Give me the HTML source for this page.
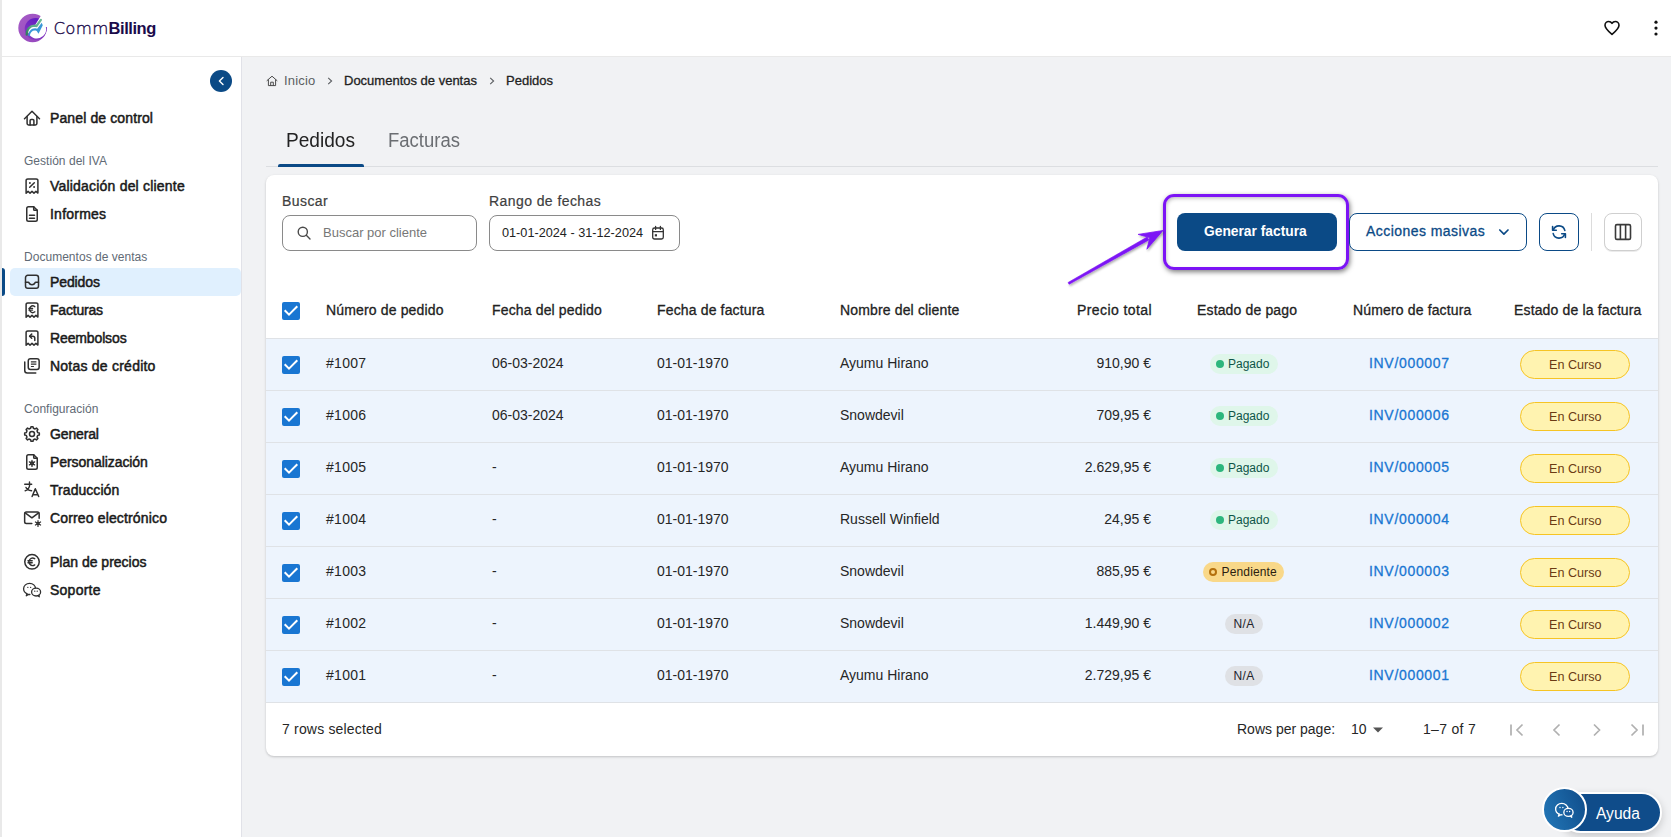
<!DOCTYPE html>
<html lang="es">
<head>
<meta charset="utf-8">
<title>CommBilling - Pedidos</title>
<style>
*{box-sizing:border-box;margin:0;padding:0}
html,body{width:1671px;height:837px;overflow:hidden}
body{background:#f1f2f4;font-family:"Liberation Sans",sans-serif;color:#1f1f1f;position:relative}
.abs{position:absolute}
.t{position:absolute;white-space:nowrap;line-height:1}
#edge{left:0;top:0;width:2px;height:837px;background:#e9e9e9}
#header{left:2px;top:0;width:1669px;height:57px;background:#fff;border-bottom:1px solid #e9e9e9}
#sidebar{left:2px;top:57px;width:240px;height:780px;background:#fff;border-right:1px solid #e1e2e8}
.nav{font-size:14px;color:#1a1a1a;-webkit-text-stroke:.5px #1a1a1a;letter-spacing:.05px}
.sec{font-size:12px;color:#616a75;letter-spacing:.03px}
.ico{position:absolute;width:20px;height:20px;fill:none;stroke:#303030;stroke-width:1.5;stroke-linecap:round;stroke-linejoin:round}
#active{left:10px;top:268px;width:231px;height:28px;background:#e0f0fe;border-radius:5px}
#activebar{left:2px;top:268px;width:3px;height:28px;background:#0b4a86;border-radius:0 3px 3px 0}
#collapse{left:210px;top:70px;width:22px;height:22px;border-radius:50%;background:#0b4a86}

/* main */
.bc{font-size:13px;top:74px}
.med{-webkit-text-stroke:0.3px currentColor}
#tabline{left:266px;top:166px;width:1392px;height:1px;background:#dcdee1}
#tabactive{left:278px;top:164px;width:86px;height:3px;background:#0b4a86;border-radius:2px 2px 0 0}
.tab{font-size:20px;top:130px;transform-origin:0 50%}
#card{left:266px;top:175px;width:1392px;height:581px;background:#fff;border-radius:8px;box-shadow:0 1px 3px rgba(0,0,0,.13),0 1px 2px rgba(0,0,0,.08)}
.lbl{font-size:14px;color:#404040;top:194px;letter-spacing:.42px;-webkit-text-stroke:.2px #404040 !important}
.inp{top:215px;height:36px;border:1px solid #8a8a8a;border-radius:8px;background:#fff}
.btn{top:213px;height:38px;border-radius:8px}
#hl{left:1163px;top:194px;width:186px;height:76px;border:3px solid #7c14f5;border-radius:11px;box-shadow:1px 2px 5px rgba(0,0,0,.5),inset 1px 2px 4px -1px rgba(0,0,0,.3)}
.row{left:266px;width:1392px;height:52px;background:#edf4fd;border-top:1px solid #dfe2e6}
.row .t{font-size:14px;top:17px;color:#262626}
.hd{font-size:14px;top:303px;color:#222}
.cb{left:16px;top:17px;width:18px;height:18px;background:#1976d2;border-radius:2px}
.c1{left:60px;letter-spacing:.3px}.c2{left:226px}.c3{left:391px}.c4{left:574px}.c5{right:507px}
.inv{left:1103px;color:#1976d2 !important;letter-spacing:.68px}
.badge{position:absolute;top:15px;height:20px;border-radius:10px;font-size:12px}
.badge .t{font-size:12px !important;top:4px !important}
.pg{background:#dff6ea}.pg .dot{position:absolute;left:6px;top:6px;width:8px;height:8px;border-radius:50%;background:#2db67d}
.pd{background:#f9d889}.pd .dot{position:absolute;left:6px;top:6px;width:8px;height:8px;border-radius:50%;border:2px solid #b4700d}
.na{background:#dfe1e5}
.ec{position:absolute;left:1254px;top:11px;width:110px;height:29px;border-radius:15px;background:#fff3b0;border:1px solid #f6c424}
.ec .t{font-size:12.600px !important;left:28px;top:8px !important;color:#6b3b14 !important}
.ft{font-size:14px;top:722px;color:#262626}
</style>
</head>
<body>
<div id="edge" class="abs"></div>
<div id="header" class="abs"></div>
<div id="sidebar" class="abs"></div>

<!-- HEADER -->
<svg class="abs" style="left:16px;top:12px" width="34" height="32" viewBox="16 12 34 32">
<defs>
<linearGradient id="lg1" x1="0" y1="0" x2="1" y2="1"><stop offset="0" stop-color="#a65cc6"/><stop offset="1" stop-color="#9445bd"/></linearGradient>
<linearGradient id="lg2" x1="0.8" y1="0" x2="0.2" y2="1"><stop offset="0" stop-color="#5d18c4"/><stop offset="1" stop-color="#8a3cc0"/></linearGradient>
<linearGradient id="lg3" x1="0" y1="1" x2="1" y2="0"><stop offset="0" stop-color="#2f7d5c"/><stop offset=".5" stop-color="#5fae8b"/><stop offset="1" stop-color="#6db897"/></linearGradient>
</defs>
<circle cx="32.6" cy="27.950" r="14.300" fill="url(#lg1)"/>
<circle cx="35.600" cy="29" r="10.900" fill="url(#lg2)"/>
<path d="M26.700 34.600C26.500 29.600 29.800 25.800 34.700 25.700L35.600 24.300 41.200 15.300 50 11 50 27.070 45.830 27.070A9.200 9.200 0 0 1 28.370 32.750z" fill="#fff"/>
<path d="M28.300 35.800C28.400 31.500 31 28.400 35.200 28.300L37.200 28.700 41.700 22.800 42.800 25.200 38.500 33.800 36.700 30.900C33.300 29.600 30.300 31.600 29.700 36.200z" fill="#3a97d8"/>
<path d="M26.700 34.600C26.500 29.600 29.800 25.800 34.700 25.700L36.500 26 40.900 19.900" fill="none" stroke="url(#lg3)" stroke-width="2.300" stroke-linecap="round" stroke-linejoin="round"/>
</svg>
<div class="t" style="left:53.5px;top:20px;font-size:16.5px;color:#1b0b4b"><span style="font-family:'DejaVu Sans','Liberation Sans',sans-serif;font-weight:200;font-size:16.6px;letter-spacing:.25px;-webkit-text-stroke:.35px #1b0b4b">Comm</span><span style="font-weight:bold;letter-spacing:-.45px">Billing</span></div>
<svg class="abs" style="left:1602px;top:18px" width="20" height="20" viewBox="0 0 20 20" fill="none" stroke="#111" stroke-width="1.600" stroke-linejoin="round"><path d="M10 16.400C6.500 13.500 3 10.700 3 7.300 3 5.100 4.700 3.500 6.700 3.500 8.100 3.500 9.300 4.200 10 5.400 10.700 4.200 11.900 3.500 13.300 3.500 15.300 3.500 17 5.100 17 7.300 17 10.700 13.500 13.500 10 16.400z"/></svg>
<svg class="abs" style="left:1652px;top:18px" width="8" height="20" viewBox="0 0 8 20" fill="#111"><circle cx="4" cy="4.200" r="1.600"/><circle cx="4" cy="10.100" r="1.600"/><circle cx="4" cy="16" r="1.600"/></svg>

<!-- SIDEBAR -->
<div id="active" class="abs"></div>
<div id="activebar" class="abs"></div>
<div id="collapse" class="abs"><svg width="22" height="22" viewBox="0 0 22 22"><path d="M13 7.400 9.400 11l3.600 3.600" fill="none" stroke="#fff" stroke-width="1.400" stroke-linecap="round" stroke-linejoin="round"/></svg></div>

<div class="t nav" style="left:50px;top:111px;letter-spacing:0.12px">Panel de control</div>
<div class="t sec" style="left:24px;top:155px">Gestión del IVA</div>
<div class="t nav" style="left:50px;top:179px;letter-spacing:0.2px">Validación del cliente</div>
<div class="t nav" style="left:50px;top:207px;letter-spacing:0.23px">Informes</div>
<div class="t sec" style="left:24px;top:251px">Documentos de ventas</div>
<div class="t nav" style="left:50px;top:275px;letter-spacing:-0.1px">Pedidos</div>
<div class="t nav" style="left:50px;top:303px;letter-spacing:-0.2px">Facturas</div>
<div class="t nav" style="left:50px;top:331px;letter-spacing:-0.13px">Reembolsos</div>
<div class="t nav" style="left:50px;top:359px;letter-spacing:0.23px">Notas de crédito</div>
<div class="t sec" style="left:24px;top:403px">Configuración</div>
<div class="t nav" style="left:50px;top:427px;letter-spacing:-0.15px">General</div>
<div class="t nav" style="left:50px;top:455px;letter-spacing:-0.07px">Personalización</div>
<div class="t nav" style="left:50px;top:483px;letter-spacing:0.05px">Traducción</div>
<div class="t nav" style="left:50px;top:511px;letter-spacing:0.15px">Correo electrónico</div>
<div class="t nav" style="left:50px;top:555px;letter-spacing:0px">Plan de precios</div>
<div class="t nav" style="left:50px;top:583px;letter-spacing:0.25px">Soporte</div>

<svg class="ico" style="left:22px;top:108px" viewBox="0 0 20 20"><path d="M2.500 10.700 10 3.300l7.500 7.400"/><path d="M5.100 8.600v6.900a1.400 1.400 0 0 0 1.400 1.400h7a1.400 1.400 0 0 0 1.400-1.400V8.600"/><path d="M8.100 16.900v-4.500a1 1 0 0 1 1-1h1.800a1 1 0 0 1 1 1v4.500"/></svg>
<svg class="ico" style="left:22px;top:176px" viewBox="0 0 20 20"><path d="M4.1 17.2V4.6a1.7 1.7 0 0 1 1.7-1.7h8.400a1.700 1.700 0 0 1 1.700 1.700v12.500l-1.967-1.700-1.967 1.700-1.967-1.700-1.967 1.700-1.967-1.700z"/><path d="M12.300 6.700 7.700 11.300"/><circle cx="7.900" cy="7" r=".95" fill="#303030" stroke="none"/><circle cx="12.100" cy="11" r=".95" fill="#303030" stroke="none"/></svg>
<svg class="ico" style="left:22px;top:204px" viewBox="0 0 20 20"><path d="M4.75 4.5a1.75 1.75 0 0 1 1.750-1.750h5.2l3.550 3.550v9.200a1.750 1.750 0 0 1-1.750 1.750h-7a1.750 1.750 0 0 1-1.750-1.750z"/><path d="M11.700 2.750v2.800a.75.75 0 0 0 .75.75h2.800"/><path d="M7.500 11.300h5M7.500 14.300h5"/></svg>
<svg class="ico" style="left:22px;top:272px" viewBox="0 0 20 20"><rect x="3.500" y="3.350" width="13" height="13" rx="2.300"/><path d="M3.500 10.300h2.600c.5 0 .9.300 1.100.8.400 1 1.500 1.600 2.800 1.600s2.400-.6 2.800-1.600c.2-.5.600-.8 1.100-.8h2.600"/></svg>
<svg class="ico" style="left:22px;top:300px" viewBox="0 0 20 20"><path d="M4.1 17.2V4.6a1.7 1.7 0 0 1 1.7-1.7h8.400a1.700 1.700 0 0 1 1.700 1.700v12.500l-1.967-1.700-1.967 1.700-1.967-1.700-1.967 1.700-1.967-1.700z"/><path d="M12.900 6.700a3.300 3.300 0 1 0 0 5.100M6.900 8.400h3.700M6.900 10.100h3.700" stroke-width="1.300"/></svg>
<svg class="ico" style="left:22px;top:328px" viewBox="0 0 20 20"><path d="M4.1 17.2V4.6a1.7 1.7 0 0 1 1.7-1.7h8.400a1.700 1.700 0 0 1 1.700 1.700v12.500l-1.967-1.700-1.967 1.700-1.967-1.700-1.967 1.700-1.967-1.700z"/><path d="M9.700 6.100 7.600 8.200l2.100 2.100"/><path d="M7.800 8.200h2.900a2.100 2.100 0 0 1 2.100 2.100v2.300"/></svg>
<svg class="ico" style="left:22px;top:356px" viewBox="0 0 20 20"><rect x="6.250" y="2.750" width="10.900" height="10.700" rx="2.200"/><path d="M2.750 6v8.600a2.500 2.500 0 0 0 2.500 2.500h8.500"/><path d="M8.900 5.800h5.500M8.900 8.200h5.500M8.900 10.500h3" stroke-width="1.200" stroke-linecap="butt"/></svg>
<svg class="ico" style="left:22px;top:424px" viewBox="0 0 20 20"><path d="M8.62 4.26 L9.01 2.67 L10.99 2.67 L11.38 4.26 L13.08 4.97 L14.49 4.12 L15.88 5.51 L15.03 6.92 L15.74 8.62 L17.33 9.01 L17.33 10.99 L15.74 11.38 L15.03 13.08 L15.88 14.49 L14.49 15.88 L13.08 15.03 L11.38 15.74 L10.99 17.33 L9.01 17.33 L8.62 15.74 L6.92 15.03 L5.51 15.88 L4.12 14.49 L4.97 13.08 L4.26 11.38 L2.67 10.99 L2.67 9.01 L4.26 8.62 L4.97 6.92 L4.12 5.51 L5.51 4.12 L6.92 4.97Z"/><circle cx="10" cy="10" r="2.500"/></svg>
<svg class="ico" style="left:22px;top:452px" viewBox="0 0 20 20"><path d="M4.75 4.5a1.75 1.75 0 0 1 1.750-1.750h5.2l3.550 3.550v9.200a1.750 1.750 0 0 1-1.750 1.750h-7a1.750 1.750 0 0 1-1.750-1.750z"/><path d="M11.700 2.750v2.800a.75.75 0 0 0 .75.75h2.800"/><circle cx="10" cy="11.400" r="1.300"/><path d="M10.00 8.40L10.00 14.40M12.60 9.90L7.40 12.90M12.60 12.90L7.40 9.90" stroke-width="1.300"/></svg>
<svg class="ico" style="left:22px;top:480px" viewBox="0 0 20 20"><path d="M2.700 4.200h7M7.500 2v2.200M7.700 4.400C7.600 7.200 6.300 9.600 3.100 10.800M4 7.500C4.700 9.300 6.400 10.300 9.600 10.700" stroke-width="1.400"/><path d="M10.100 16.500 13.300 8.800 16.700 16.500M11.200 14.700h4.400" stroke-width="1.500"/></svg>
<svg class="ico" style="left:22px;top:508px" viewBox="0 0 20 20"><path d="M9.800 15.450H4.400a1.750 1.750 0 0 1-1.750-1.750V5.700A1.750 1.750 0 0 1 4.400 3.950h11a1.750 1.750 0 0 1 1.750 1.750v4.500"/><path d="M3.200 4.800 9.900 9.800 16.600 4.800"/><circle cx="16" cy="15.500" r="1.200" stroke-width="1.200"/><path d="M16.00 12.50L16.00 18.50M18.60 14.00L13.40 17.00M18.60 17.00L13.40 14.00" stroke-width="1.200"/></svg>
<svg class="ico" style="left:22px;top:552px" viewBox="0 0 20 20"><circle cx="10" cy="9.800" r="7.250"/><path d="M12.700 6.700a3.700 3.700 0 1 0 0 6.200M6 8.800h4.200M6 10.800h4.200" stroke-width="1.400"/></svg>
<svg class="ico" style="left:22px;top:580px" viewBox="0 0 20 20"><path d="M5 13.800c-2-.9-3.400-2.800-3.400-5 0-3.100 2.700-5.500 6-5.500s6 2.400 6 5.500" stroke-width="1.300"/><path d="M5 13.800l-.7 2 2.300-1.400c.4.100.9.100 1.300.100" stroke-width="1.300"/><ellipse cx="14.100" cy="12.100" rx="4.500" ry="3.900" stroke-width="1.300" fill="#fff"/><path d="M15.800 15.700l1.500 1.200-.3-1.900" stroke-width="1.200"/><path d="M5.800 7.300h.1M8.600 7.300h.1M12.700 11.200h.1M15.200 11.200h.1" stroke-width="1.300"/></svg>

<!-- MAIN -->
<svg class="abs" style="left:266px;top:75px" width="12" height="12" viewBox="0 0 12 12" fill="none" stroke="#4a4a4a" stroke-width="1" stroke-linejoin="round" stroke-linecap="round"><path d="M1 5.6 6 1.2l5 4.4M2.4 4.8V10.6h7.2V4.8M4.7 10.6V7.2h2.6v3.4"/></svg>
<div class="t bc" style="left:284px;color:#5c5f62;letter-spacing:.2px">Inicio</div>
<svg class="abs" style="left:326px;top:76px" width="8" height="10" viewBox="0 0 8 10" fill="none" stroke="#5c5f62" stroke-width="1.1"><path d="M2.2 1.8 5.6 5 2.2 8.2"/></svg>
<div class="t bc med" style="left:344px;color:#222">Documentos de ventas</div>
<svg class="abs" style="left:488px;top:76px" width="8" height="10" viewBox="0 0 8 10" fill="none" stroke="#5c5f62" stroke-width="1.1"><path d="M2.2 1.8 5.6 5 2.2 8.2"/></svg>
<div class="t bc med" style="left:506px;color:#222">Pedidos</div>

<div id="tabline" class="abs"></div>
<div id="tabactive" class="abs"></div>
<div class="t tab" style="left:286px;color:#222;transform:scaleX(.955)">Pedidos</div>
<div class="t tab" style="left:388px;color:#6b6e72;transform:scaleX(.925)">Facturas</div>

<div id="card" class="abs"></div>
<div class="t lbl med" style="left:282px">Buscar</div>
<div class="t lbl med" style="left:489px">Rango de fechas</div>
<div class="abs inp" style="left:282px;width:195px"></div>
<svg class="abs" style="left:296px;top:225px" width="16" height="16" viewBox="0 0 16 16" fill="none" stroke="#4a4a4a" stroke-width="1.4" stroke-linecap="round"><circle cx="6.8" cy="6.8" r="4.6"/><path d="M10.3 10.3 14 14"/></svg>
<div class="t" style="left:323px;top:226px;font-size:13px;color:#777">Buscar por cliente</div>
<div class="abs inp" style="left:489px;width:191px"></div>
<div class="t" style="left:502px;top:227px;font-size:12.7px;color:#222">01-01-2024 - 31-12-2024</div>
<svg class="abs" style="left:651px;top:225px" width="14" height="16" viewBox="0 0 14 16" fill="none" stroke="#333" stroke-width="1.3" stroke-linecap="round"><rect x="1.7" y="3" width="10.6" height="11" rx="1.8"/><path d="M1.7 6.6h10.6M4.6 1.4v3M9.4 1.4v3"/><rect x="3.8" y="9.2" width="2.2" height="2.2" fill="#333" stroke="none"/></svg>

<div id="hl" class="abs"></div>
<svg class="abs" style="left:1060px;top:222px" width="110" height="70" viewBox="1060 222 110 70"><g filter="url(#ash)"><path d="M1068.100 282.500 1069.100 284.300 1148.850 239.980 1147.150 237.020z" fill="#7c14f5" stroke="#7c14f5" stroke-width=".6" stroke-linejoin="round"/><path d="M1163 230.500 1138.200 234.400 1149.800 237.600 1146.900 249.200Z" fill="#7c14f5" stroke="#7c14f5" stroke-width=".8" stroke-linejoin="round"/></g><defs><filter id="ash" x="-10%" y="-10%" width="130%" height="130%"><feDropShadow dx="1" dy="1.5" stdDeviation="1" flood-color="#000" flood-opacity=".35"/></filter></defs></svg>
<div class="abs btn" style="left:1177px;width:160px;background:#0b4a86"></div>
<div class="t" style="left:1204px;top:225px;font-size:13.8px;font-weight:bold;color:#fff">Generar factura</div>
<div class="abs btn" style="left:1349px;width:178px;background:#fff;border:1px solid #0b4a86"></div>
<div class="t med" style="left:1366px;top:224px;font-size:14px;letter-spacing:.45px;color:#0b4a86">Acciones masivas</div>
<svg class="abs" style="left:1497px;top:227px" width="14" height="10" viewBox="0 0 14 10" fill="none" stroke="#0b4a86" stroke-width="1.700" stroke-linecap="round" stroke-linejoin="round"><path d="M2.800 3 6.900 7.100 11 3"/></svg>
<div class="abs btn" style="left:1539px;width:40px;background:#fff;border:1px solid #0b4a86"></div>
<svg class="abs" style="left:1550px;top:223px" width="18" height="18" viewBox="0 0 18 18" fill="none" stroke="#0b4a86" stroke-width="1.6" stroke-linecap="round" stroke-linejoin="round"><path d="M3.300 7A6 6 0 0 1 14.800 7.400M14.700 11A6 6 0 0 1 3.200 10.600"/><path d="M2.600 3.600v3.700h3.700M15.400 14.400v-3.700h-3.700"/></svg>
<div class="abs" style="left:1591px;top:213px;width:1px;height:38px;background:#dcdcdc"></div>
<div class="abs btn" style="left:1604px;width:38px;background:#fff;border:1px solid #cfcfcf;box-shadow:0 1px 0 rgba(0,0,0,.08)"></div>
<svg class="abs" style="left:1614px;top:223px" width="18" height="18" viewBox="0 0 18 18" fill="none" stroke="#3a3a3a" stroke-width="1.600" stroke-linejoin="round"><rect x="1.500" y="1.600" width="15" height="14.800" rx="1.400"/><path d="M6.400 1.600v14.800M11.600 1.600v14.800"/></svg>

<!-- TABLE -->
<div class="abs cb" style="left:282px;top:302px"><svg width="18" height="18" viewBox="0 0 18 18"><path d="M2.700 8.300 7 12.600 15.300 4.300" fill="none" stroke="#fff" stroke-width="2"/></svg></div>
<div class="t hd med" style="left:326px;letter-spacing:.15px">Número de pedido</div>
<div class="t hd med" style="left:492px;letter-spacing:.15px">Fecha del pedido</div>
<div class="t hd med" style="left:657px;letter-spacing:.15px">Fecha de factura</div>
<div class="t hd med" style="left:840px;letter-spacing:.15px">Nombre del cliente</div>
<div class="t hd med" style="left:1077px;letter-spacing:.42px">Precio total</div>
<div class="t hd med" style="left:1197px;letter-spacing:.15px">Estado de pago</div>
<div class="t hd med" style="left:1353px;letter-spacing:.15px">Número de factura</div>
<div class="t hd med" style="left:1514px;letter-spacing:.15px">Estado de la factura</div>
<div class="abs row" style="top:338px"><div class="abs cb"><svg width="18" height="18" viewBox="0 0 18 18"><path d="M2.700 8.300 7 12.600 15.300 4.300" fill="none" stroke="#fff" stroke-width="2"/></svg></div><span class="t c1">#1007</span><span class="t c2">06-03-2024</span><span class="t c3">01-01-1970</span><span class="t c4">Ayumu Hirano</span><span class="t c5">910,90 €</span><div class="badge pg" style="left:944px;width:68px"><span class="dot"></span><span class="t" style="left:18px;color:#0e5548">Pagado</span></div><span class="t inv med">INV/000007</span><div class="ec"><span class="t">En Curso</span></div></div>
<div class="abs row" style="top:390px"><div class="abs cb"><svg width="18" height="18" viewBox="0 0 18 18"><path d="M2.700 8.300 7 12.600 15.300 4.300" fill="none" stroke="#fff" stroke-width="2"/></svg></div><span class="t c1">#1006</span><span class="t c2">06-03-2024</span><span class="t c3">01-01-1970</span><span class="t c4">Snowdevil</span><span class="t c5">709,95 €</span><div class="badge pg" style="left:944px;width:68px"><span class="dot"></span><span class="t" style="left:18px;color:#0e5548">Pagado</span></div><span class="t inv med">INV/000006</span><div class="ec"><span class="t">En Curso</span></div></div>
<div class="abs row" style="top:442px"><div class="abs cb"><svg width="18" height="18" viewBox="0 0 18 18"><path d="M2.700 8.300 7 12.600 15.300 4.300" fill="none" stroke="#fff" stroke-width="2"/></svg></div><span class="t c1">#1005</span><span class="t c2">-</span><span class="t c3">01-01-1970</span><span class="t c4">Ayumu Hirano</span><span class="t c5">2.629,95 €</span><div class="badge pg" style="left:944px;width:68px"><span class="dot"></span><span class="t" style="left:18px;color:#0e5548">Pagado</span></div><span class="t inv med">INV/000005</span><div class="ec"><span class="t">En Curso</span></div></div>
<div class="abs row" style="top:494px"><div class="abs cb"><svg width="18" height="18" viewBox="0 0 18 18"><path d="M2.700 8.300 7 12.600 15.300 4.300" fill="none" stroke="#fff" stroke-width="2"/></svg></div><span class="t c1">#1004</span><span class="t c2">-</span><span class="t c3">01-01-1970</span><span class="t c4">Russell Winfield</span><span class="t c5">24,95 €</span><div class="badge pg" style="left:944px;width:68px"><span class="dot"></span><span class="t" style="left:18px;color:#0e5548">Pagado</span></div><span class="t inv med">INV/000004</span><div class="ec"><span class="t">En Curso</span></div></div>
<div class="abs row" style="top:546px"><div class="abs cb"><svg width="18" height="18" viewBox="0 0 18 18"><path d="M2.700 8.300 7 12.600 15.300 4.300" fill="none" stroke="#fff" stroke-width="2"/></svg></div><span class="t c1">#1003</span><span class="t c2">-</span><span class="t c3">01-01-1970</span><span class="t c4">Snowdevil</span><span class="t c5">885,95 €</span><div class="badge pd" style="left:937px;width:81px"><span class="dot"></span><span class="t" style="left:18.5px;color:#2a2010;letter-spacing:.15px">Pendiente</span></div><span class="t inv med">INV/000003</span><div class="ec"><span class="t">En Curso</span></div></div>
<div class="abs row" style="top:598px"><div class="abs cb"><svg width="18" height="18" viewBox="0 0 18 18"><path d="M2.700 8.300 7 12.600 15.300 4.300" fill="none" stroke="#fff" stroke-width="2"/></svg></div><span class="t c1">#1002</span><span class="t c2">-</span><span class="t c3">01-01-1970</span><span class="t c4">Snowdevil</span><span class="t c5">1.449,90 €</span><div class="badge na" style="left:959px;width:38px"><span class="t" style="left:8.5px;color:#23232b;letter-spacing:.4px">N/A</span></div><span class="t inv med">INV/000002</span><div class="ec"><span class="t">En Curso</span></div></div>
<div class="abs row" style="top:650px"><div class="abs cb"><svg width="18" height="18" viewBox="0 0 18 18"><path d="M2.700 8.300 7 12.600 15.300 4.300" fill="none" stroke="#fff" stroke-width="2"/></svg></div><span class="t c1">#1001</span><span class="t c2">-</span><span class="t c3">01-01-1970</span><span class="t c4">Ayumu Hirano</span><span class="t c5">2.729,95 €</span><div class="badge na" style="left:959px;width:38px"><span class="t" style="left:8.5px;color:#23232b;letter-spacing:.4px">N/A</span></div><span class="t inv med">INV/000001</span><div class="ec"><span class="t">En Curso</span></div></div>
<div class="abs" style="left:266px;top:702px;width:1392px;height:1px;background:#dfe2e6"></div>
<div class="t ft" style="left:282px;letter-spacing:.18px">7 rows selected</div>
<div class="t ft" style="left:1237px">Rows per page:</div>
<div class="t ft" style="left:1351px">10</div>
<svg class="abs" style="left:1372px;top:726px" width="12" height="8" viewBox="0 0 12 8"><path d="M1 1.5h10L6 6.5z" fill="#555"/></svg>
<div class="t ft" style="left:1423px;letter-spacing:.3px">1–7 of 7</div>
<svg class="abs" style="left:1507px;top:719.500px" width="140" height="20" viewBox="0 0 140 20" fill="none" stroke="#b0b0b0" stroke-width="1.7"><path d="M4 4.5v11M15.5 4.5 10 10l5.5 5.5M52.5 4.5 47 10l5.5 5.5M87 4.5 92.500 10 87 15.500M124.500 4.500 130 10l-5.500 5.500M136 4.500v11"/></svg>
<div class="abs" style="left:1560px;top:792px;width:102px;height:41px;border-radius:21px;background:#0f4c8a;border:2px solid #fff;box-shadow:0 3px 8px rgba(0,0,0,.18)"></div>
<div class="abs" style="left:1542px;top:787px;width:45px;height:45px;border-radius:50%;background:linear-gradient(70deg,#2378b8,#0f4c8a);border:2px solid #fff"></div>
<svg class="abs" style="left:1553.500px;top:800px;fill:none;stroke:#fff;stroke-width:1.300;stroke-linecap:round;stroke-linejoin:round" width="20.500" height="20.500" viewBox="0 0 20 20"><path d="M5 13.800c-2-.9-3.400-2.800-3.400-5 0-3.100 2.700-5.500 6-5.500s6 2.400 6 5.500" stroke-width="1.300"/><path d="M5 13.800l-.7 2 2.300-1.400c.4.100.9.100 1.300.100" stroke-width="1.300"/><ellipse cx="14.100" cy="12.100" rx="4.500" ry="3.900" stroke-width="1.300" fill="#175a9c"/><path d="M15.800 15.700l1.500 1.200-.3-1.900" stroke-width="1.200"/><path d="M5.800 7.300h.1M8.600 7.300h.1M12.700 11.200h.1M15.200 11.200h.1" stroke-width="1.300"/></svg>
<div class="t" style="left:1596px;top:806px;font-size:15.6px;color:#fff">Ayuda</div>

</body>
</html>
